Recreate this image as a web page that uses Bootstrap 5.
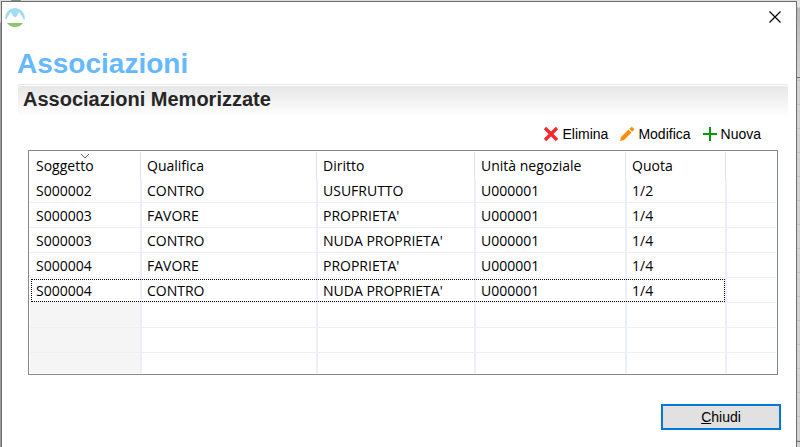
<!DOCTYPE html>
<html lang="it">
<head>
<meta charset="utf-8">
<meta name="viewport" content="width=device-width, initial-scale=1">
<title>Associazioni</title>
<link href="https://cdn.jsdelivr.net/npm/bootstrap@5.3.0/dist/css/bootstrap.min.css" rel="stylesheet">
<style>
  body {
    background:
      linear-gradient(#8c8c8c, #8c8c8c) 11px 0 / 10px 1px no-repeat,
      linear-gradient(#d4d4d4 22px, #9a9a9a 23px) 0 0 / 1px 100% no-repeat,
      linear-gradient(#6e6e6e, #6e6e6e) 100% 77px / 3px 1px no-repeat,
      linear-gradient(#6e6e6e, #6e6e6e) 100% 441px / 3px 1px no-repeat,
      linear-gradient(#e4e4e4 7px, #b8b8b8 8px, #d2d2d2 77px, transparent 78px) 100% 0 / 3px 100% no-repeat,
      repeating-linear-gradient(#d2d2d2 0 23px, #c2c2c2 23px 24px) 100% 9px / 3px 100% repeat-y,
      #dcdcdc;
    font-family: "Liberation Sans", Arial, sans-serif; font-size: 14px; color: #000; padding: 1px 3px 0 1px;
  }
  .dialog { border: 1px solid #6e6e6e; border-bottom: 0; background: #fff; }
  .title-bar { padding: 5px 14px 0 3px; height: 46px; }
  .btn-x { width: 14px; height: 14px; margin-top: 3px; line-height: 0; }
  .page-title { font-size: 28px; line-height: 32px; color: #66b8ff; margin: 0 15px 4px; }
  .section-title { font-size: 20px; line-height: 24px; color: #262626; margin: 0 7px 0 15px; padding: 2px 6px 6px; border-top: 1px solid #e8e8e8; border-radius: 4px 4px 0 0; background: linear-gradient(#e6e6e6, #fff) padding-box; box-shadow: inset 0 0 0 1px #fff; }
  .tools { padding: 7px 35px 6px; gap: 11px; }
  .tools .btn, .btn-close-dialog { font-size: 14px; line-height: 20px; color: #000; }
  .tools svg { margin-right: 3px; }
  .grid-box { border: 1px solid #828790; margin: 0 18px 0 26px; padding: 1px; }
  .grid { table-layout: fixed; border-collapse: separate; border-spacing: 0; font-family: "Segoe UI", "Open Sans", sans-serif; font-size: 14px; line-height: 20px; }
  .grid th { font-weight: 400; height: 26px; padding: 4px 5px 2px; border-right: 1px solid #fff; box-shadow: inset -1px 0 #e2e2e2; position: relative; }
  .grid td { height: 25px; padding: 2px 0 0 5px; border-right: 2px solid #ebeff7; border-bottom: 1px solid #efefef; white-space: nowrap; }
  .grid th:first-child, .grid td:first-child { padding-left: 6px; }
  .grid th:last-child, .grid td:last-child { border-right: 0; box-shadow: none; }
  .grid tr:last-child td { border-bottom: 0; height: 20px; }
  .grid .blank td:first-child { background: #f5f5f5; }
  .sort-mark { position: absolute; left: 50px; top: 1px; }
  .focused td:first-child { position: relative; }
  .focused td:first-child::after { content: ""; position: absolute; left: 1px; top: 1px; width: 694px; height: 23px; border: 1px dotted #000; pointer-events: none; }
  .c1 { width: 112px; } .c2 { width: 176px; } .c3 { width: 158px; } .c4 { width: 151px; } .c5 { width: 100px; }
  .foot { padding: 29px 15px 18px; }
  .btn-close-dialog { width: 120px; border: 2px solid #0078d7; background: #e1e1e1; padding: 1px 0; }
</style>
<script src="https://cdn.jsdelivr.net/npm/bootstrap@5.3.0/dist/js/bootstrap.bundle.min.js"></script>
</head>
<body class="min-vh-100 d-flex">
<main class="dialog flex-grow-1">
  <header class="title-bar d-flex justify-content-between align-items-start">
    <svg width="20" height="20" viewBox="0 0 20 20" aria-hidden="true">
      <path d="M0 11A10 10 0 0 1 20 11L19 13L17.500 10L14 5L12 9L10 10.500L8 9L6 5L2.500 10L1 13Z" fill="#a3dcf0"/>
      <path d="M2 16H18Q15 20 10 20Q5 20 2 16Z" fill="#8cc468"/>
    </svg>
    <button type="button" class="btn btn-x p-0 border-0" aria-label="Chiudi finestra">
      <svg width="14" height="14" viewBox="0 0 14 14"><path d="M1.500 1.500L12.500 12.500M12.500 1.500L1.500 12.500" stroke="#000" stroke-width="1.200"/></svg>
    </button>
  </header>
  <h1 class="page-title fw-bold">Associazioni</h1>
  <h2 class="section-title fw-bold">Associazioni Memorizzate</h2>
  <div class="tools d-flex justify-content-end">
    <button type="button" class="btn p-0 border-0 d-flex align-items-center"><svg width="16" height="16" viewBox="0 0 16 16"><path d="M2 2L14 14M14 2L2 14" stroke="#f8282c" stroke-width="3.400"/></svg>Elimina</button>
    <button type="button" class="btn p-0 border-0 d-flex align-items-center"><svg width="16" height="16" viewBox="0 0 16 16"><path d="M1 15L2 11L9.500 3.500L12.500 6.500L5 14ZM10.300 2.700L12 1.200Q12.700.6 13.500 1.300L14.700 2.500Q15.300 3.300 14.800 4L13.300 5.700Z" fill="#ff8c0a"/></svg>Modifica</button>
    <button type="button" class="btn p-0 border-0 d-flex align-items-center"><svg width="16" height="16" viewBox="0 0 16 16"><path d="M8 1V15M1 8H15" stroke="#0a9b0a" stroke-width="2"/></svg>Nuova</button>
  </div>
  <div class="grid-box">
    <table class="grid w-100">
      <colgroup><col class="c1"><col class="c2"><col class="c3"><col class="c4"><col class="c5"><col></colgroup>
      <thead><tr><th scope="col">Soggetto<svg class="sort-mark" width="10" height="6" viewBox="0 0 10 6" aria-hidden="true"><path d="M1 1L5 5L9 1" fill="none" stroke="#666"/></svg></th><th scope="col">Qualifica</th><th scope="col">Diritto</th><th scope="col">Unità negoziale</th><th scope="col">Quota</th><th></th></tr></thead>
      <tbody>
        <tr><td>S000002</td><td>CONTRO</td><td>USUFRUTTO</td><td>U000001</td><td>1/2</td><td></td></tr>
        <tr><td>S000003</td><td>FAVORE</td><td>PROPRIETA'</td><td>U000001</td><td>1/4</td><td></td></tr>
        <tr><td>S000003</td><td>CONTRO</td><td>NUDA PROPRIETA'</td><td>U000001</td><td>1/4</td><td></td></tr>
        <tr><td>S000004</td><td>FAVORE</td><td>PROPRIETA'</td><td>U000001</td><td>1/4</td><td></td></tr>
        <tr class="focused"><td>S000004</td><td>CONTRO</td><td>NUDA PROPRIETA'</td><td>U000001</td><td>1/4</td><td></td></tr>
        <tr class="blank"><td></td><td></td><td></td><td></td><td></td><td></td></tr>
        <tr class="blank"><td></td><td></td><td></td><td></td><td></td><td></td></tr>
        <tr class="blank"><td></td><td></td><td></td><td></td><td></td><td></td></tr>
      </tbody>
    </table>
  </div>
  <footer class="foot d-flex justify-content-end">
    <button type="button" class="btn btn-close-dialog rounded-0"><u>C</u>hiudi</button>
  </footer>
</main>
</body>
</html>
